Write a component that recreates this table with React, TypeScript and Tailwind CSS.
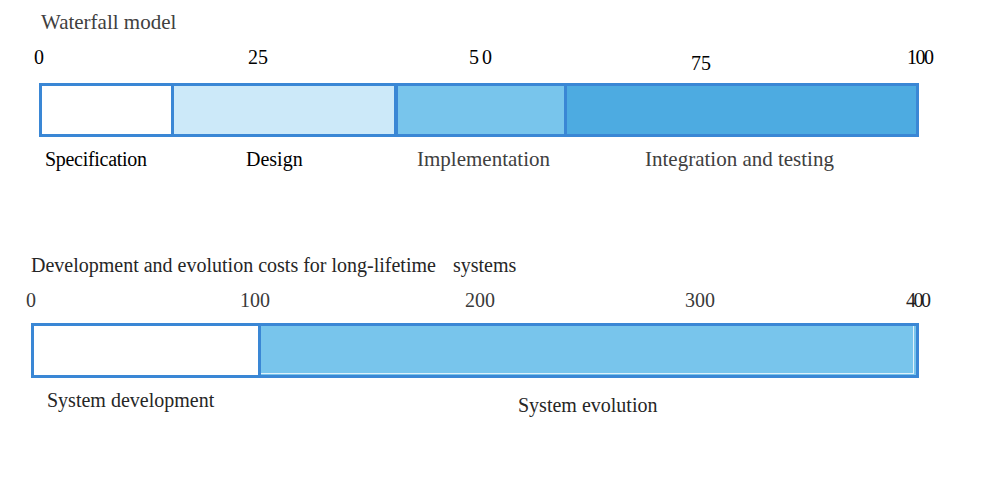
import React from "react";

export default function App() {
  return (
    <div
      className="w-[1000px] h-[482px] bg-white overflow-hidden text-[20px] leading-[24px] text-black"
      style={{ fontFamily: '"Liberation Serif", "Times New Roman", serif' }}
    >
      {/* Waterfall model */}
      <div className="mt-[10px] h-[24px] pl-[41px] text-[#404040] text-[21px]">Waterfall model</div>

      <div className="mt-[11px] h-[24px] pl-[34px] flex items-start">
        <span className="w-[214px] shrink-0">0</span>
        <span className="w-[221px] shrink-0">25</span>
        <span className="w-[222px] shrink-0 whitespace-pre tracking-[-1px]">5 0</span>
        <span className="w-[216px] shrink-0 mt-[6px]">75</span>
        <span className="shrink-0 tracking-[-1.5px]">100</span>
      </div>

      <div className="mt-[14px] ml-[39px] w-[880px] h-[54px] border-[3px] border-[#3a87d5] flex">
        <div className="w-[132px] shrink-0 h-full bg-white border-r-[3px] border-[#3a87d5]" />
        <div className="w-[224px] shrink-0 h-full bg-[#cce9f9] border-r-[4px] border-[#3a87d5]" />
        <div className="w-[169px] shrink-0 h-full bg-[#78c5ec] border-r-[3px] border-[#3a87d5]" />
        <div className="flex-1 h-full bg-[#4dabe1]" />
      </div>

      <div className="mt-[10px] h-[24px] pl-[45px] flex items-start">
        <span className="w-[201px] shrink-0 tracking-[-0.3px]">Specification</span>
        <span className="w-[171px] shrink-0">Design</span>
        <span className="w-[228px] shrink-0 text-[#404040] text-[21px]">Implementation</span>
        <span className="shrink-0 text-[#404040] text-[21px]">Integration and testing</span>
      </div>

      {/* Development and evolution costs */}
      <div className="mt-[82px] h-[24px] pl-[31px] text-[#262626] whitespace-pre">
        Development and evolution costs for long-lifetime<span className="ml-[17px]">systems</span>
      </div>

      <div className="mt-[11px] h-[24px] pl-[26px] flex items-start text-[#3a3a3a]">
        <span className="w-[214px] shrink-0">0</span>
        <span className="w-[225px] shrink-0">100</span>
        <span className="w-[220px] shrink-0">200</span>
        <span className="w-[221px] shrink-0">300</span>
        <span className="shrink-0 tracking-[-2.5px] text-[#222]">400</span>
      </div>

      <div className="mt-[11px] ml-[31px] w-[888px] h-[55px] border-[3px] border-[#3a87d5] flex">
        <div className="w-[227px] shrink-0 h-full bg-white border-r-[3px] border-[#3a87d5]" />
        <div className="flex-1 h-full bg-[#78c5ec] pr-[2px] pb-[1px]">
          <div className="h-full border-r border-b border-[#dff1fb]" />
        </div>
      </div>

      <div className="mt-[10px] h-[24px] pl-[47px] flex items-start text-[#262626]">
        <span className="w-[471px] shrink-0">System development</span>
        <span className="shrink-0 mt-[5px]">System evolution</span>
      </div>
    </div>
  );
}
